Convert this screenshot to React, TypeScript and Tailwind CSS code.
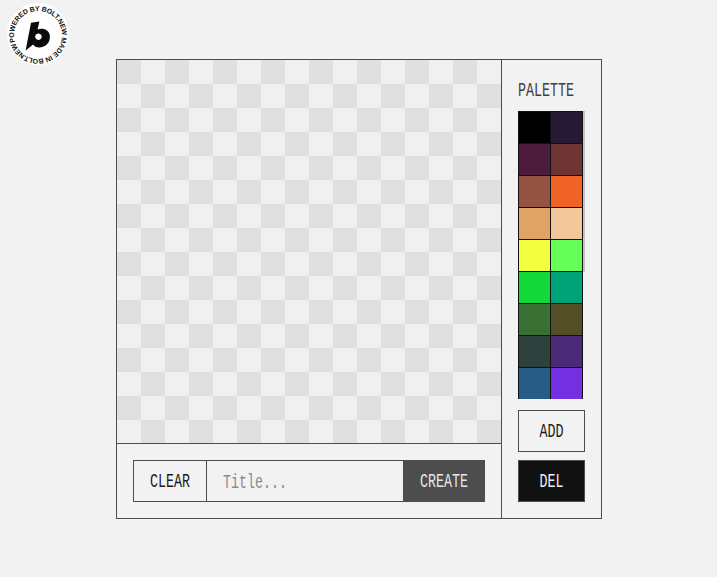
const colors = ["#000000","#241a33","#4d1c3d","#6e3333","#945240","#ef6426","#e0a366","#f2c799","#f2ff40","#66ff59","#14d93b","#00a375","#3a7033","#544f26","#2e403b","#4a2b78","#265c85","#7330e0"];
const cells = Array.from({ length: 256 }, (_, i) => ((i % 16) + Math.floor(i / 16)) % 2 === 0);
const label = "inline-block scale-y-[1.45] text-[13.33px] leading-none";
export default function App() {
  return (
    <div className="w-[717px] h-[577px] bg-[#f2f2f2] relative overflow-hidden font-['Liberation_Mono',monospace] pt-[59px] pl-[116px]">
      <a className="absolute left-0 top-0 w-[72px] h-[72px]">
        <svg viewBox="0 0 72 72" width="72" height="72">
          <circle cx="38" cy="34" r="31" fill="#ffffff" />
          <g transform="rotate(-17 38 35)">
            <path id="ring" d="M14 35 a24 24 0 1 1 48 0 a24 24 0 1 1 -48 0" fill="none" />
            <text fontSize="7" fontFamily="Liberation Sans" fontWeight="700" fill="#111111">
              <textPath href="#ring" textLength="149" lengthAdjust="spacing">POWERED BY BOLT.NEW MADE IN BOLT.NEW</textPath>
            </text>
          </g>
          <path d="M31 22.8 L39.4 21.4 L37.6 29.6 C39 28.9 40.6 28.6 42.2 28.8 C47.6 29.4 50.6 33.2 49.8 38.4 C49 43.8 44.2 47.6 39 47.4 C36.2 47.3 34.4 46.2 33.2 44.4 L25.6 50.4 Z M38.4 33.4 a3.3 3.3 0 1 0 .1 0 Z" fill="#0a0a0a" fillRule="evenodd" />
        </svg>
      </a>
      <div className="w-[486px] h-[460px] border border-[#4d4d4d] flex">
        <div className="w-[385px] border-r border-[#4d4d4d] flex flex-col">
          <div className="w-[384px] h-[383px] overflow-hidden grid grid-cols-[repeat(16,24px)] auto-rows-[24px]">
            {cells.map((d, i) => <div key={i} className={d ? "bg-[#e0e0e0]" : "bg-[#f0f0f0]"} />)}
          </div>
          <div className="flex-1 border-t border-[#4d4d4d] px-4 pt-4">
            <div className="flex h-[42px] w-[352px]">
              <button className="w-[74px] border border-[#4d4d4d] text-[#1a1a1a]"><span className={label}>CLEAR</span></button>
              <div className="w-[196px] border-y border-[#4d4d4d] px-4 pt-[3px] flex items-center text-[#8c8c8c]"><span className={label}>Title...</span></div>
              <button className="w-[82px] bg-[#4d4d4d] text-[#e6e6e6]"><span className={label}>CREATE</span></button>
            </div>
          </div>
        </div>
        <div className="flex-1 pl-4 pt-[18px]">
          <div className="h-[14px] text-[#404040]"><span className={label}>PALETTE</span></div>
          <div className="relative mt-[19px] w-[65px] h-[288px] overflow-hidden border-r border-[#111111]">
            <div className="grid grid-cols-[repeat(2,32px)] auto-rows-[32px]">
              {colors.map((c) => <div key={c} className="border-l border-t border-[#111111]" style={{ backgroundColor: c }} />)}
            </div>
          </div>
          <div className="absolute left-[583px] top-[111px] w-[2px] h-[161px] bg-[#c4c4c4]" />
          <button className="mt-[11px] block w-[67px] h-[42px] border border-[#4d4d4d] text-[#1a1a1a]"><span className={label}>ADD</span></button>
          <button className="mt-[8px] block w-[67px] h-[42px] border border-[#4d4d4d] bg-[#111111] text-[#f0f0f0]"><span className={label}>DEL</span></button>
        </div>
      </div>
    </div>
  );
}
